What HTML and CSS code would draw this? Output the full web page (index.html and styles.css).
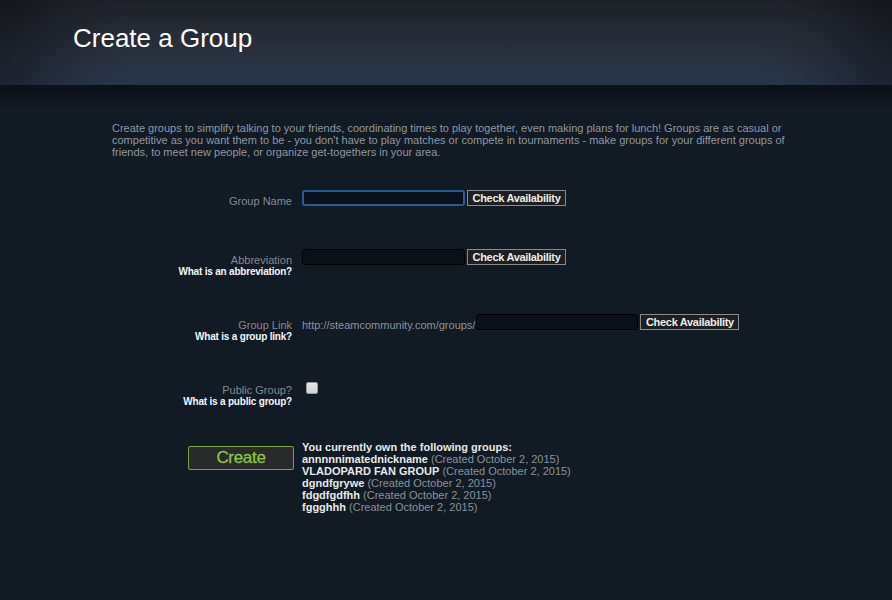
FILE: index.html
```html
<html><head><title>Create a Group</title>
<link rel="stylesheet" href="styles.css">
</head>
<body>
    <div class="page-header">
        <h1>Create a Group</h1>
    </div>

    <div class="page-content">
        <p class="intro">Create groups to simplify talking to your friends, coordinating times to play together, even making plans for lunch! Groups are as casual or competitive as you want them to be - you don't have to play matches or compete in tournaments - make groups for your different groups of friends, to meet new people, or organize get-togethers in your area.</p>

        <form id="createGroupForm">
            <div class="form-row row-first">
                <div class="label-col">
                    <label for="groupName">Group Name</label>
                </div>
                <div class="field-col">
                    <input type="text" id="groupName" class="text-input focused">
                    <button type="button" class="check-btn">Check Availability</button>
                </div>
            </div>

            <div class="form-row">
                <div class="label-col">
                    <label for="abbreviation">Abbreviation</label>
                    <a class="help-link" href="#">What is an abbreviation?</a>
                </div>
                <div class="field-col">
                    <input type="text" id="abbreviation" class="text-input">
                    <button type="button" class="check-btn">Check Availability</button>
                </div>
            </div>

            <div class="form-row">
                <div class="label-col">
                    <label for="groupLink">Group Link</label>
                    <a class="help-link" href="#">What is a group link?</a>
                </div>
                <div class="field-col">
                    <span class="url-prefix">http://steamcommunity.com/groups/</span>
                    <input type="text" id="groupLink" class="text-input link-input">
                    <button type="button" class="check-btn">Check Availability</button>
                </div>
            </div>

            <div class="form-row row-public">
                <div class="label-col">
                    <label for="publicGroup">Public Group?</label>
                    <a class="help-link" href="#">What is a public group?</a>
                </div>
                <div class="field-col">
                    <input type="checkbox" id="publicGroup" class="check-box">
                </div>
            </div>

            <div class="form-row row-create">
                <div class="label-col">
                    <button type="submit" class="create-btn">Create</button>
                </div>
                <div class="field-col owned-groups">
                    <div class="owned-title">You currently own the following groups:</div>
                    <div><span class="group-name">annnnnimatednickname</span> <span class="created">(Created October 2, 2015)</span></div>
                    <div><span class="group-name">VLADOPARD FAN GROUP</span> <span class="created">(Created October 2, 2015)</span></div>
                    <div><span class="group-name">dgndfgrywe</span> <span class="created">(Created October 2, 2015)</span></div>
                    <div><span class="group-name">fdgdfgdfhh</span> <span class="created">(Created October 2, 2015)</span></div>
                    <div><span class="group-name">fggghhh</span> <span class="created">(Created October 2, 2015)</span></div>
                </div>
            </div>
        </form>
    </div>
</body></html>
```

FILE: styles.css
```css
body {
    font-family: 'Liberation Sans', Arial, sans-serif;
    background: #121a24;
    margin: 0;
    height: 100vh;
}

.page-header {
    height: 85px;
    padding-left: 73px;
    box-sizing: border-box;
    background: linear-gradient(to bottom, #22262d 0%, #2a303c 55%, #2f3d55 100%);
    box-shadow: inset 90px 0 80px -40px rgba(0, 0, 0, 0.4), inset -90px 0 80px -40px rgba(0, 0, 0, 0.4);
}

h1 {
    margin: 0;
    padding-top: 23px;
    font-size: 26px;
    line-height: 30px;
    font-weight: normal;
    color: #ffffff;
}

.page-content {
    padding: 37px 0 0 112px;
    background: linear-gradient(to bottom, #0c1117 0px, #121a24 25px) no-repeat;
}

.intro {
    margin: 0 0 32px 0;
    width: 680px;
    font-size: 11px;
    color: #8f98a0;
}

.form-row {
    display: flex;
    align-items: flex-start;
    height: 65px;
}

.row-first {
    height: 59px;
}

.row-public {
    height: 62px;
}

.label-col {
    width: 180px;
    margin-right: 10px;
    text-align: right;
    padding-top: 5px;
}

label {
    display: block;
    font-size: 11px;
    color: #828a92;
}

.help-link {
    display: block;
    font-size: 10px;
    line-height: 11px;
    font-weight: bold;
    color: #f2f6fa;
    letter-spacing: -0.2px;
    text-decoration: none;
}

.field-col {
    display: flex;
    align-items: flex-start;
}

.text-input {
    width: 163px;
    height: 16px;
    margin: 0;
    padding: 0 3px;
    box-sizing: border-box;
    background: #0c1119;
    border: 1px solid #000000;
    border-radius: 3px;
    color: #ffffff;
    font-size: 11px;
}

.text-input:focus {
    outline: none;
}

.text-input.focused {
    border: 2px solid #2c5a97;
}

.link-input {
    width: 162px;
    margin-left: 1px;
}

.check-btn {
    width: 99px;
    height: 16px;
    margin: 0 0 0 2px;
    padding: 0;
    background: #1e1f20;
    border: 1px solid #8a8a8a;
    color: #ececec;
    font-family: 'Liberation Sans', Arial, sans-serif;
    font-size: 11px;
    font-weight: bold;
    letter-spacing: -0.3px;
    cursor: pointer;
}

.url-prefix {
    padding-top: 5px;
    font-size: 11px;
    color: #8a9199;
}

.check-box {
    appearance: none;
    width: 12px;
    height: 12px;
    margin: 3px 0 0 4px;
    background: linear-gradient(to bottom, #e6e6e6, #d0d0d0);
    border: 1px solid #9c9c9c;
    border-radius: 2px;
}

.row-create .label-col {
    padding-top: 5px;
    text-align: left;
}

.create-btn {
    width: 106px;
    height: 24px;
    margin-left: 76px;
    padding: 0;
    background: #282a2b;
    border: 1px solid #78a53c;
    border-radius: 2px;
    color: #8cc540;
    font-family: 'Liberation Sans', Arial, sans-serif;
    font-size: 17px;
    letter-spacing: -0.3px;
    -webkit-text-stroke: 0.3px #8cc540;
    cursor: pointer;
}

.owned-groups {
    display: block;
    font-size: 11px;
    line-height: 12px;
}

.owned-title,
.group-name {
    font-weight: bold;
    color: #e8e8e8;
}

.created {
    color: #8a9199;
}
```
